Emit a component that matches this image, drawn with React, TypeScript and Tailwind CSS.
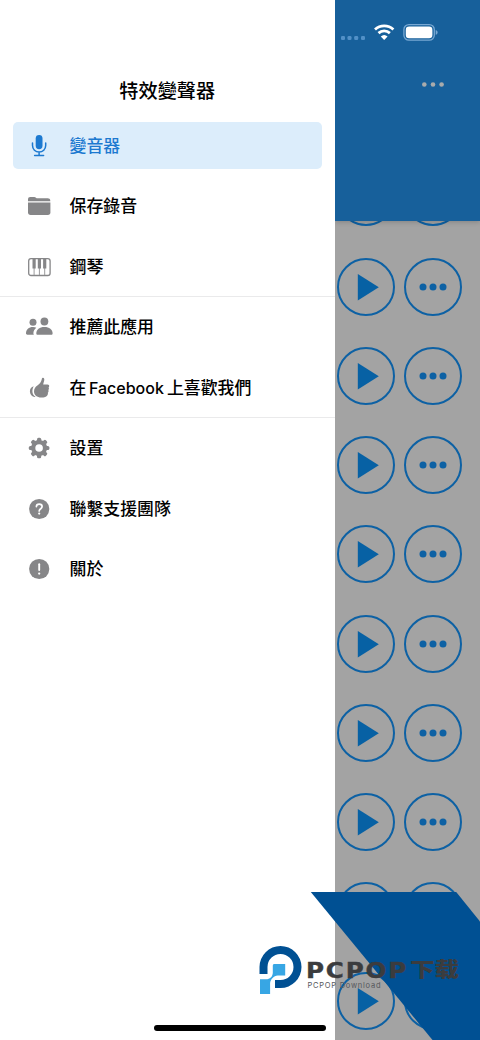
import { clsx } from "clsx";
import type { ReactNode } from "react";

type Item = {
  id: string;
  title: ReactNode;
  icon: ReactNode;
  active?: boolean;
};

const MicIcon = () => (
  <svg width="28" height="28" viewBox="0 0 28 28" fill="none">
    <rect x="10.7" y="3" width="6.8" height="14.2" rx="3.4" fill="#1c79d0" />
    <path
      d="M7.500 11v2.500a6.600 6.600 0 0 0 13.200 0V11M14.100 20.200v3.200M9.600 23.500h9"
      stroke="#1c79d0"
      strokeWidth="1.5"
      strokeLinecap="round"
    />
  </svg>
);

const FolderIcon = () => (
  <svg width="28" height="28" viewBox="0 0 28 28" fill="#868688">
    <path d="M3 9.2V7.6c0-1.7.8-2.5 2.4-2.5h3.8c.8 0 1.3.2 1.8.7l.6.5h11c1.7 0 2.6.8 2.7 2.4v.5z" />
    <path d="M3 10.4h22.4v9.9c0 1.7-.9 2.6-2.6 2.6H5.6C3.9 22.900 3 22 3 20.300z" />
  </svg>
);

const PianoIcon = () => (
  <svg width="28" height="28" viewBox="0 0 28 28" fill="none">
    <rect x="3.700" y="5.700" width="21.400" height="16.800" rx="2.300" stroke="#868688" strokeWidth="1.300" />
    <path d="M9.100 15v7M14.400 15v7M19.700 15v7" stroke="#9a9a9c" strokeWidth="1" />
    <path d="M7.500 5.900h3.200v9.700H7.500zM12.800 5.900H16v9.700h-3.200zM18.100 5.900h3.200v9.700h-3.200z" fill="#868688" />
  </svg>
);

const PeopleIcon = () => (
  <svg width="28" height="28" viewBox="0 0 28 28" fill="#868688">
    <circle cx="8" cy="9.300" r="3.500" />
    <circle cx="19.400" cy="8.500" r="3.900" />
    <path d="M1 20.500c0-3.800 2.800-6.400 7-6.400 1.300 0 2.400.2 3.300.7-1.900 1.400-2.900 3.300-2.900 5.500 0 .5.200 1 .5 1.400H2.400c-.9 0-1.400-.4-1.400-1.200z" />
    <path d="M11.300 20.400c0-3.700 3.200-6.400 8.100-6.400s8.200 2.700 8.200 6.400c0 .9-.5 1.300-1.400 1.300H12.700c-.9 0-1.400-.4-1.400-1.300z" />
  </svg>
);

const LikeIcon = () => (
  <svg width="28" height="28" viewBox="0 0 28 28" fill="#868688">
    <path d="M8.700 12.300c-2.300.6-3.800 2.500-3.800 5 0 2.900 1.700 5.200 4.400 5.600h1.300c-2.100-1.400-3.200-3.200-3.200-5.400 0-2 .4-3.700 1.300-5.200z" />
    <path d="M17.700 3.800c1-.3 1.600.6 1.600 1.800 0 1.900-.9 3.300-1.100 4.900h4.300c1.200 0 1.800.8 1.700 1.800-.1.500-.3.900-.7 1.200.4.300.5.800.4 1.300 0 .6-.3 1-.6 1.300.3.400.4.900.2 1.500-.1.500-.3.900-.7 1.200.2.400.2.800.1 1.300-.4 1.900-1.700 3.300-4.500 3.300h-2.200c-4.100 0-7.200-2.200-7.200-6 0-2.500 1.400-4.500 3.400-5.800 2.100-1.400 3.800-3.400 4.300-6 .1-1 .4-1.600 1-1.800z" />
  </svg>
);

const GearIcon = () => (
  <svg width="28" height="28" viewBox="0 0 28 28">
    <g fill="#868688">
      {[0, 45, 90, 135].map((angle) => (
        <rect
          key={angle}
          x="12"
          y="3.700"
          width="4.200"
          height="20.600"
          rx="1.500"
          transform={`rotate(${angle} 14.1 14)`}
        />
      ))}
      <circle cx="14.100" cy="14" r="8" />
    </g>
    <circle cx="14.100" cy="14" r="3.800" fill="#fff" />
  </svg>
);

const HelpIcon = () => (
  <svg width="28" height="28" viewBox="0 0 28 28" fill="none">
    <circle cx="14.200" cy="14" r="10.100" fill="#868688" />
    <path
      d="M11.400 11.600c0-1.500 1.100-2.500 2.800-2.500s2.900 1 2.900 2.400c0 1.100-.6 1.600-1.400 2.200-1 .7-1.500 1.100-1.500 2.200"
      stroke="#fff"
      strokeWidth="1.700"
      strokeLinecap="round"
    />
    <circle cx="14.200" cy="18.600" r="1.100" fill="#fff" />
  </svg>
);

const AlertIcon = () => (
  <svg width="28" height="28" viewBox="0 0 28 28" fill="none">
    <circle cx="14.200" cy="14" r="10.100" fill="#868688" />
    <path d="M14.200 9.200v5.800" stroke="#fff" strokeWidth="1.900" strokeLinecap="round" />
    <circle cx="14.200" cy="18.600" r="1.150" fill="#fff" />
  </svg>
);

const TOOLS: Item[] = [
  { id: "voice", title: "變音器", icon: <MicIcon />, active: true },
  { id: "saved", title: "保存錄音", icon: <FolderIcon /> },
  { id: "piano", title: "鋼琴", icon: <PianoIcon /> },
];

const SOCIAL: Item[] = [
  { id: "share", title: "推薦此應用", icon: <PeopleIcon /> },
  {
    id: "like",
    title: (
      <>
        在
        <span className="ml-[2.5px] mr-[2px] inline-block w-[76px] font-['Inter','Noto_Sans_CJK_TC',sans-serif] text-[16px] leading-none">
          Facebook
        </span>
        上喜歡我們
      </>
    ),
    icon: <LikeIcon />,
  },
];

const SUPPORT: Item[] = [
  { id: "settings", title: "設置", icon: <GearIcon /> },
  { id: "contact", title: "聯繫支援團隊", icon: <HelpIcon /> },
  { id: "about", title: "關於", icon: <AlertIcon /> },
];

const EFFECT_ROWS = Array.from({ length: 10 }, (_, i) => i);

function MenuRow({ item }: { item: Item }) {
  return (
    <li className="flex h-[60.5px] shrink-0 items-center px-[13px]">
      <a
        className={clsx(
          "flex h-[47px] w-full items-center rounded-[5px] pl-3",
          item.active ? "bg-[#dcedfb] text-[#1c79d0]" : "text-black"
        )}
      >
        {item.icon}
        <span className="ml-[16.5px] whitespace-nowrap pb-[1.5px] text-[16.9px] font-medium leading-6">
          {item.title}
        </span>
      </a>
    </li>
  );
}

function Drawer() {
  return (
    <nav className="flex w-[334.5px] shrink-0 flex-col bg-white">
      <h1 className="mt-[75px] h-[40.4px] text-center text-[19.2px] font-medium leading-[31px] text-black">
        特效變聲器
      </h1>
      <ul className="h-[180.6px]">
        {TOOLS.map((item) => (
          <MenuRow key={item.id} item={item} />
        ))}
      </ul>
      <ul className="h-[121.4px] border-t border-[#eaeaeb]">
        {SOCIAL.map((item) => (
          <MenuRow key={item.id} item={item} />
        ))}
      </ul>
      <ul className="border-t border-[#eaeaeb] [&>li:first-child]:-mt-[0.6px]">
        {SUPPORT.map((item) => (
          <MenuRow key={item.id} item={item} />
        ))}
      </ul>
    </nav>
  );
}

function Header() {
  return (
    <header className="relative h-[221px] shrink-0 bg-[#17609b] shadow-[0_1px_5px_rgba(0,0,0,0.2)]">
      <svg width="145" height="100" viewBox="335 0 145 100" fill="none">
        <g fill="#5290c7">
          <rect x="341" y="36" width="4" height="4" rx="1.300" />
          <rect x="347.500" y="36" width="4" height="4" rx="1.300" />
          <rect x="354.200" y="36" width="4" height="4" rx="1.300" />
          <rect x="361" y="36" width="4" height="4" rx="1.300" />
        </g>
        <path
          d="M375 29.400a13.500 13.500 0 0 1 18.400 0M378.500 33.100a8.400 8.400 0 0 1 11.400 0"
          stroke="#fff"
          strokeWidth="2.800"
        />
        <path d="M380.800 36.500a5 5 0 0 1 6.800 0l-3.400 3.600z" fill="#fff" />
        <rect x="403.900" y="24.600" width="30.400" height="15.600" rx="5" stroke="#78a8d3" strokeWidth="1.300" />
        <rect x="405.800" y="26.600" width="26.600" height="11.600" rx="3.300" fill="#fff" />
        <path d="M435.700 30c2.600.8 2.600 4 0 4.800z" fill="#78a8d3" />
        <g fill="#a9abac">
          <circle cx="424.300" cy="84.500" r="2.300" />
          <circle cx="433" cy="84.500" r="2.300" />
          <circle cx="441.600" cy="84.500" r="2.300" />
        </g>
      </svg>
    </header>
  );
}

function EffectList() {
  return (
    <div className="min-h-0 flex-1 overflow-hidden">
      <div className="-mt-[52.7px] flex flex-col gap-[31.25px]">
        {EFFECT_ROWS.map((row) => (
          <div key={row} className="flex h-[58px] shrink-0 gap-[9px] pl-[2.3px]">
            <svg width="58" height="58" viewBox="0 0 58 58" className="shrink-0">
              <circle cx="29" cy="29" r="28" fill="none" stroke="#0d61a4" strokeWidth="2" />
              <path d="M20.800 16v26.400L41.800 29.200z" fill="#0761a4" />
            </svg>
            <svg width="58" height="58" viewBox="0 0 58 58" className="shrink-0">
              <circle cx="29" cy="29" r="28" fill="none" stroke="#0d61a4" strokeWidth="2" />
              <g fill="#0d61a4">
                <circle cx="19" cy="29" r="3.500" />
                <circle cx="29" cy="29" r="3.500" />
                <circle cx="39" cy="29" r="3.500" />
              </g>
            </svg>
          </div>
        ))}
      </div>
    </div>
  );
}

function Watermark() {
  return (
    <svg
      className="absolute bottom-0 right-0"
      width="240"
      height="180"
      viewBox="240 860 240 180"
    >
      <path d="M310.800 892h145.400L480 921.500V1040h-47.500z" fill="#005093" />
      <path
        d="M259.500 974v-7a21 21 0 1 1 21 21H275v-8h5.500a13 13 0 1 0-13-13v7z"
        fill="#005093"
      />
      <path
        d="M274.500 964h10.700v11.500h-7.500c-4 .5-7 3.500-7.600 7.500V994H260v-14.700h6c4 0 6.500-2.500 6.800-6.300v-7.300c0-1.200.6-1.700 1.700-1.700z"
        fill="#37a6e4"
      />
      <g fill="#3b3c3e">
        <text
          x="306"
          y="977.800"
          fontFamily="DejaVu Sans, sans-serif"
          fontSize="20.500"
          fontWeight="700"
          letterSpacing="1.500"
          stroke="#3b3c3e"
          strokeWidth=".4"
          textLength="102"
          lengthAdjust="spacingAndGlyphs"
        >
          PCPOP
        </text>
        <text
          x="410"
          y="977.300"
          fontFamily="Noto Sans CJK SC, sans-serif"
          fontSize="20"
          fontWeight="900"
          textLength="49"
          lengthAdjust="spacingAndGlyphs"
        >
          下载
        </text>
      </g>
      <text
        x="307.500"
        y="988"
        fontFamily="Inter, sans-serif"
        fontSize="7.500"
        fill="#55575b"
        textLength="73"
      >
        PCPOP Download
      </text>
    </svg>
  );
}

export default function App() {
  return (
    <div className="relative flex h-[1040px] w-[480px] overflow-hidden bg-[#a3a3a3] font-['Noto_Sans_CJK_TC',sans-serif]">
      <Drawer />
      <main className="flex min-w-0 flex-1 flex-col overflow-hidden">
        <Header />
        <EffectList />
      </main>
      <Watermark />
      <div className="absolute bottom-[9px] left-[154px] h-[6px] w-[172px] rounded-full bg-black" />
    </div>
  );
}
